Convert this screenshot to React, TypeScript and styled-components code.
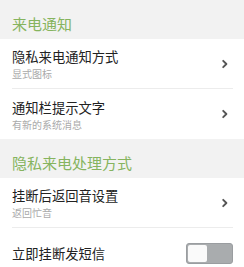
import { FunctionComponent } from "react";
import styled, { createGlobalStyle } from "styled-components";

const GlobalStyle = createGlobalStyle`
  html, body {
    margin: 0;
    padding: 0;
    background: #ffffff;
  }
  body {
    font-family: "Noto Sans CJK SC", "Noto Sans", sans-serif;
  }
`;

interface RowProps {
  title: string;
  subtitle?: string;
  divider?: boolean;
  toggle?: boolean;
}

const Chevron = () => (
  <svg width="8" height="10" viewBox="0 0 8 10">
    <path
      d="M2.2 1.8 L5.4 5 L2.2 8.2"
      fill="none"
      stroke="#555"
      strokeWidth="1.9"
      strokeLinecap="round"
      strokeLinejoin="round"
    />
  </svg>
);

const SettingRow: FunctionComponent<RowProps> = ({ title, subtitle, divider, toggle }) => (
  <Row $divider={divider}>
    <div className="text">
      <span className="title">{title}</span>
      {subtitle && <span className="subtitle">{subtitle}</span>}
    </div>
    {toggle ? (
      <Toggle>
        <span className="thumb" />
      </Toggle>
    ) : (
      <div className="arrow">
        <Chevron />
      </div>
    )}
  </Row>
);

const App = () => (
  <>
    <GlobalStyle />
    <Page>
      <SectionHeader>来电通知</SectionHeader>
      <SettingRow title="隐私来电通知方式" subtitle="显式图标" divider />
      <SettingRow title="通知栏提示文字" subtitle="有新的系统消息" />
      <SectionHeader>隐私来电处理方式</SectionHeader>
      <SettingRow title="挂断后返回音设置" subtitle="返回忙音" divider />
      <SettingRow title="立即挂断发短信" toggle />
    </Page>
  </>
);

const Page = styled.div`
  width: 244px;
  display: flex;
  flex-direction: column;
`;

const SectionHeader = styled.div`
  height: 39px;
  background: #f2f2f2;
  color: #86b45e;
  font-size: 15px;
  line-height: 1;
  display: flex;
  align-items: center;
  padding: 7px 12px 0;
  box-sizing: border-box;
`;

const Row = styled.div<{ $divider?: boolean }>`
  height: 50px;
  margin: 0 11px 0 12px;
  display: flex;
  align-items: center;
  justify-content: space-between;
  box-sizing: border-box;
  border-bottom: ${({ $divider }) => ($divider ? "1px solid #ececec" : "none")};

  .text {
    display: flex;
    flex-direction: column;
    gap: 3px;
    padding-top: 1px;
  }

  .title {
    color: #222;
    font-size: 13.3px;
    line-height: 16px;
  }

  .subtitle {
    color: #aaa;
    font-size: 10px;
    line-height: 11px;
  }

  .arrow {
    display: flex;
    align-items: center;
    padding-right: 4px;
  }
`;

const Toggle = styled.div`
  width: 47px;
  height: 21px;
  background: #a9acae;
  border: 1px solid #9a9da0;
  border-radius: 3px;
  box-sizing: border-box;
  display: flex;
  padding: 1px;

  .thumb {
    width: 19px;
    height: 100%;
    background: #fafafa;
    border-radius: 2px;
  }
`;

export default App;
